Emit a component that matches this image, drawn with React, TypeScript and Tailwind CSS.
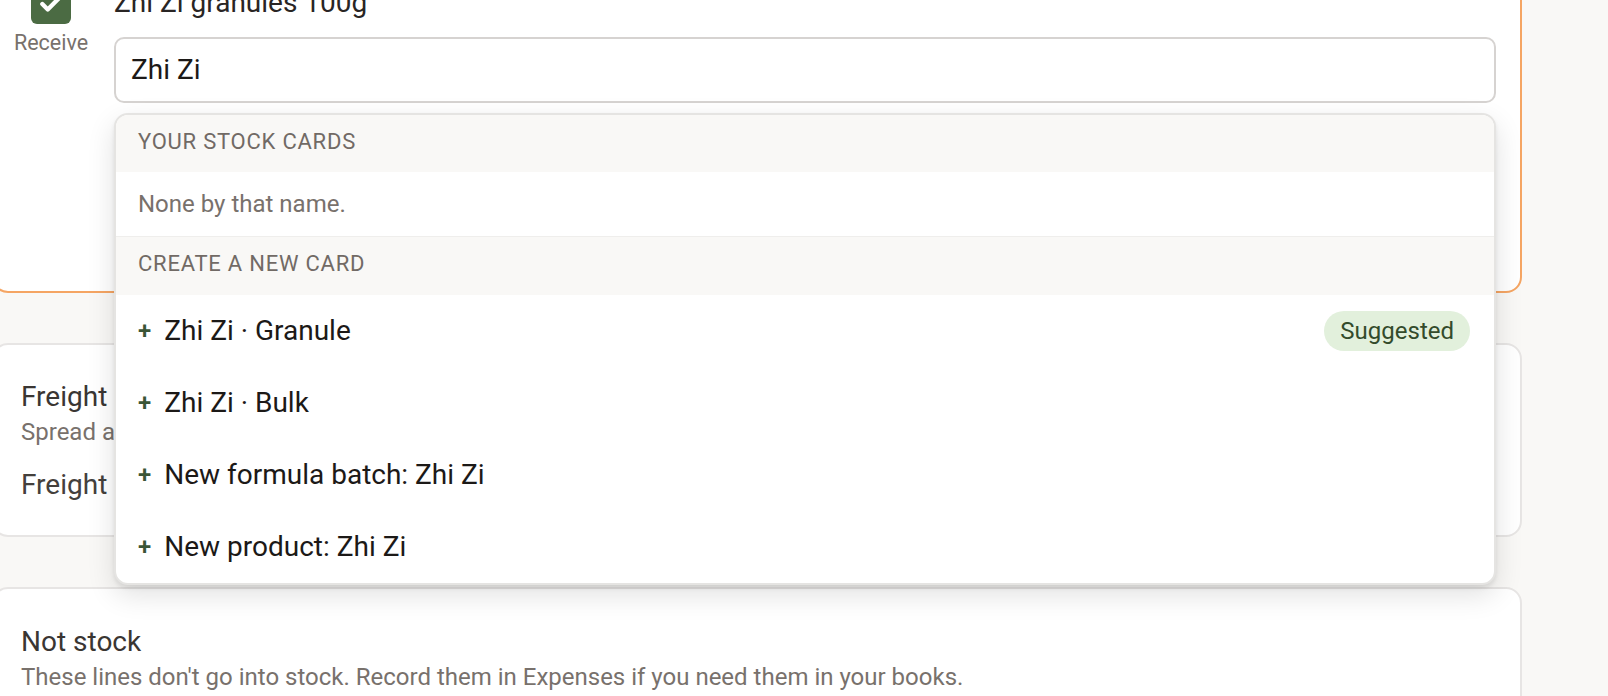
import React from "react";
import { Check } from "lucide-react";

const options = ["Zhi Zi · Granule", "Zhi Zi · Bulk", "New formula batch: Zhi Zi", "New product: Zhi Zi"];

const App = () => {
  return (
    <div className="h-[696px] w-[1608px] overflow-hidden bg-[#f9f8f6] font-['Roboto',sans-serif]">
      <div className="ml-[-8px] mt-[-50px] flex w-[1530px] flex-col gap-[50px]">
        {/* receive line card */}
        <div className="flex gap-[25px] rounded-[16px] border-2 border-[#f5a563] bg-white pb-[188px] pl-[19px] pr-[24px] pt-[30px]">
          <div className="flex w-[76px] flex-col items-center pt-[2px]">
            <div className="flex h-[40px] w-[40px] items-center justify-center rounded-[6px] bg-[#4b6b43]">
              <Check size={26} strokeWidth={4} className="text-white" />
            </div>
            <span className="mt-[4px] text-[21.5px] leading-[30px] text-[#78716c]">Receive</span>
          </div>
          <div className="flex-1">
            <div className="text-[28px] leading-[42px] text-[#292524]">Zhi Zi granules 100g</div>
            <div className="relative mt-[13px]">
              <div className="flex h-[66px] items-center rounded-[10px] border-2 border-[#d6d3d1] px-[15px] text-[28px] text-[#1c1917]">
                Zhi Zi
              </div>

              <div className="absolute left-0 right-0 top-[76px] z-10 overflow-hidden rounded-[14px] border-2 border-[#e5e4e2] bg-white shadow-[0_3px_4px_rgba(0,0,0,0.08),0_10px_28px_rgba(0,0,0,0.12)]">
                <div className="h-[57px] bg-[#f9f8f6] px-[22px] pt-[12px] text-[22px] uppercase leading-[30px] tracking-[0.035em] text-[#716a65]">
                  Your stock cards
                </div>
                <div className="h-[64px] px-[22px] pt-[15px] text-[24px] leading-[34px] text-[#78716c]">None by that name.</div>
                <div className="h-[59px] border-t border-[#efeeec] bg-[#f9f8f6] px-[22px] pt-[12px] text-[22px] uppercase leading-[30px] tracking-[0.035em] text-[#716a65]">
                  Create a new card
                </div>
                {options.map((o, i) => (
                  <div key={o} className="flex h-[72px] items-center gap-[13px] px-[22px]">
                    <span className="text-[24px] font-semibold text-[#3b5536]">+</span>
                    <span className="text-[28px] text-[#1c1917]">{o}</span>
                    {i === 0 && (
                      <span className="ml-auto mr-[2px] flex h-[40px] items-center rounded-full bg-[#e2f0dc] px-[16px] text-[24px] text-[#334b2b]">
                        Suggested
                      </span>
                    )}
                  </div>
                ))}
              </div>
            </div>
          </div>
        </div>

        {/* freight */}
        <div className="rounded-[16px] border-2 border-[#e7e5e4] bg-white pb-[29px] pl-[27px] pr-[24px] pt-[34px]">
          <div className="text-[28px] leading-[36px] text-[#3a3633]">Freight</div>
          <div className="text-[24px] leading-[34px] text-[#78716c]">Spread across the lines by value.</div>
          <div className="mt-[15px] text-[28px] leading-[42px] text-[#44403c]">Freight</div>
        </div>

        {/* not stock */}
        <div className="h-[200px] rounded-[16px] border-2 border-[#e7e5e4] bg-white pl-[27px] pr-[24px] pt-[35px]">
          <div className="text-[28px] leading-[36px] text-[#3a3633]">Not stock</div>
          <div className="text-[24px] leading-[34px] text-[#78716c]">
            These lines don't go into stock. Record them in Expenses if you need them in your books.
          </div>
        </div>
      </div>
    </div>
  );
};

export default App;
